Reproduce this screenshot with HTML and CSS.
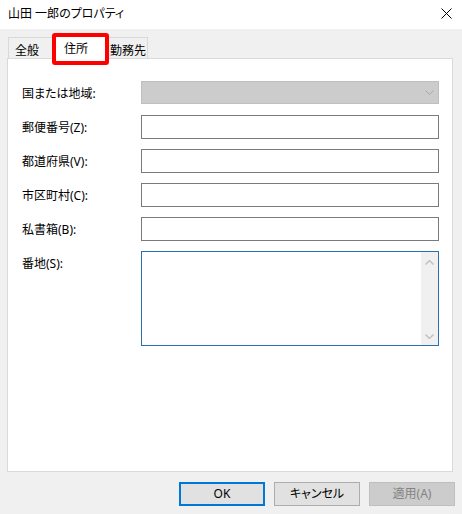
FILE: index.html
```html
<!DOCTYPE html>
<html lang="ja">
<head>
  <meta charset="UTF-8">
  <title>山田 一郎のプロパティ</title>
  <link rel="stylesheet" href="styles.css">
</head>
<body>
  <div class="window">
    <div class="titlebar">
      <span class="title">山田 一郎のプロパティ</span>
      <svg class="close" width="11" height="11" viewBox="0 0 11 11">
        <path d="M0.5 0.5 L10.5 10.5 M10.5 0.5 L0.5 10.5" stroke="#000" stroke-width="1" fill="none"/>
      </svg>
    </div>

    <div class="client">
      <div class="tabs">
        <div class="tab tab-general">全般</div>
        <div class="tab tab-address active">住所<span class="mark"></span></div>
        <div class="tab tab-office">勤務先</div>
      </div>

      <div class="panel">
        <div class="row">
          <label>国または地域:</label>
          <div class="combo">
            <svg width="9" height="5" viewBox="0 0 9 5"><path d="M0.5 0.5 L4.5 4.5 L8.5 0.5" stroke="#a8a8a8" fill="none"/></svg>
          </div>
        </div>
        <div class="row">
          <label>郵便番号(Z):</label>
          <div class="textbox"></div>
        </div>
        <div class="row">
          <label>都道府県(V):</label>
          <div class="textbox"></div>
        </div>
        <div class="row">
          <label>市区町村(C):</label>
          <div class="textbox"></div>
        </div>
        <div class="row">
          <label>私書箱(B):</label>
          <div class="textbox"></div>
        </div>
        <div class="row">
          <label>番地(S):</label>
          <div class="textarea">
            <div class="scrollbar">
              <svg width="9" height="5" viewBox="0 0 9 5"><path d="M0.5 4.5 L4.5 0.5 L8.5 4.5" stroke="#c2c2c2" stroke-width="1.5" fill="none"/></svg>
              <svg width="9" height="5" viewBox="0 0 9 5"><path d="M0.5 0.5 L4.5 4.5 L8.5 0.5" stroke="#c2c2c2" stroke-width="1.5" fill="none"/></svg>
            </div>
          </div>
        </div>
      </div>

      <div class="buttons">
        <button class="btn default">OK</button>
        <button class="btn">キャンセル</button>
        <button class="btn disabled">適用(A)</button>
      </div>
    </div>
  </div>
</body>
</html>
```

FILE: styles.css
```css
body {
  margin: 0;
  padding: 0;
  font-family: "Noto Sans", "Noto Sans CJK JP", sans-serif;
  font-size: 12px;
  font-feature-settings: "palt";
  color: #000;
  background: #f0f0f0;
}
.window {
  width: 462px;
  height: 514px;
  overflow: hidden;
}
.titlebar {
  height: 29px;
  background: #fff;
  display: flex;
  justify-content: space-between;
  align-items: center;
  padding: 0 10px 0 8px;
  box-sizing: border-box;
}
.title {
  line-height: 16px;
  margin-top: -1px;
}
.close {
  margin-top: -3px;
}
.client {
  padding: 8px 7px 0 7px;
}
.tabs {
  display: flex;
  align-items: flex-end;
  height: 21px;
  padding-left: 1px;
}
.tab {
  height: 21px;
  box-sizing: border-box;
  border: 1px solid #d9d9d9;
  border-bottom: none;
  background: #f0f0f0;
  line-height: 25px;
  white-space: nowrap;
}
.tab-general {
  width: 44px;
  padding-left: 6px;
  border-right: none;
}
.tab-address {
  position: relative;
  width: 57px;
  height: 25px;
  margin-bottom: -1px;
  padding-left: 11px;
  background: #fff;
  line-height: 27px;
  z-index: 1;
}
.tab-office {
  width: 39px;
  padding-left: 1px;
  border-left: none;
}
.mark {
  position: absolute;
  left: -1px;
  top: -2px;
  width: 57px;
  height: 32px;
  box-sizing: border-box;
  border: 4px solid #f00;
  border-radius: 3px;
}
.panel {
  width: 446px;
  height: 414px;
  box-sizing: border-box;
  border: 1px solid #d9d9d9;
  background: #fff;
  padding: 22px 13px 0 14px;
  display: flex;
  flex-direction: column;
  gap: 10px;
}
.row {
  display: flex;
  align-items: flex-start;
}
.row label {
  width: 119px;
  height: 24px;
  line-height: 26px;
  flex-shrink: 0;
}
.combo {
  flex: 1;
  height: 23px;
  box-sizing: border-box;
  background: #cccccc;
  border: 1px solid #bfbfbf;
  display: flex;
  justify-content: flex-end;
  align-items: center;
  padding-right: 4px;
}
.textbox {
  flex: 1;
  height: 24px;
  box-sizing: border-box;
  border: 1px solid #7a7a7a;
  background: #fff;
}
.textarea {
  flex: 1;
  height: 95px;
  box-sizing: border-box;
  border: 1px solid #2a6fae;
  background: #fff;
  display: flex;
  justify-content: flex-end;
}
.scrollbar {
  width: 17px;
  background: #f0f0f0;
  display: flex;
  flex-direction: column;
  justify-content: space-between;
  align-items: center;
  padding: 8px 0 6px;
}
.buttons {
  display: flex;
  justify-content: flex-end;
  gap: 9px;
  margin-top: 10px;
}
.btn {
  width: 86px;
  height: 24px;
  box-sizing: border-box;
  border: 1px solid #adadad;
  background: #e1e1e1;
  font-family: inherit;
  font-size: 12px;
  font-feature-settings: "palt";
  color: #000;
  padding: 0;
  line-height: 20px;
}
.btn.default {
  border: 2px solid #0078d7;
}
.btn.disabled {
  background: #cccccc;
  border-color: #bfbfbf;
  color: #838383;
}
```
